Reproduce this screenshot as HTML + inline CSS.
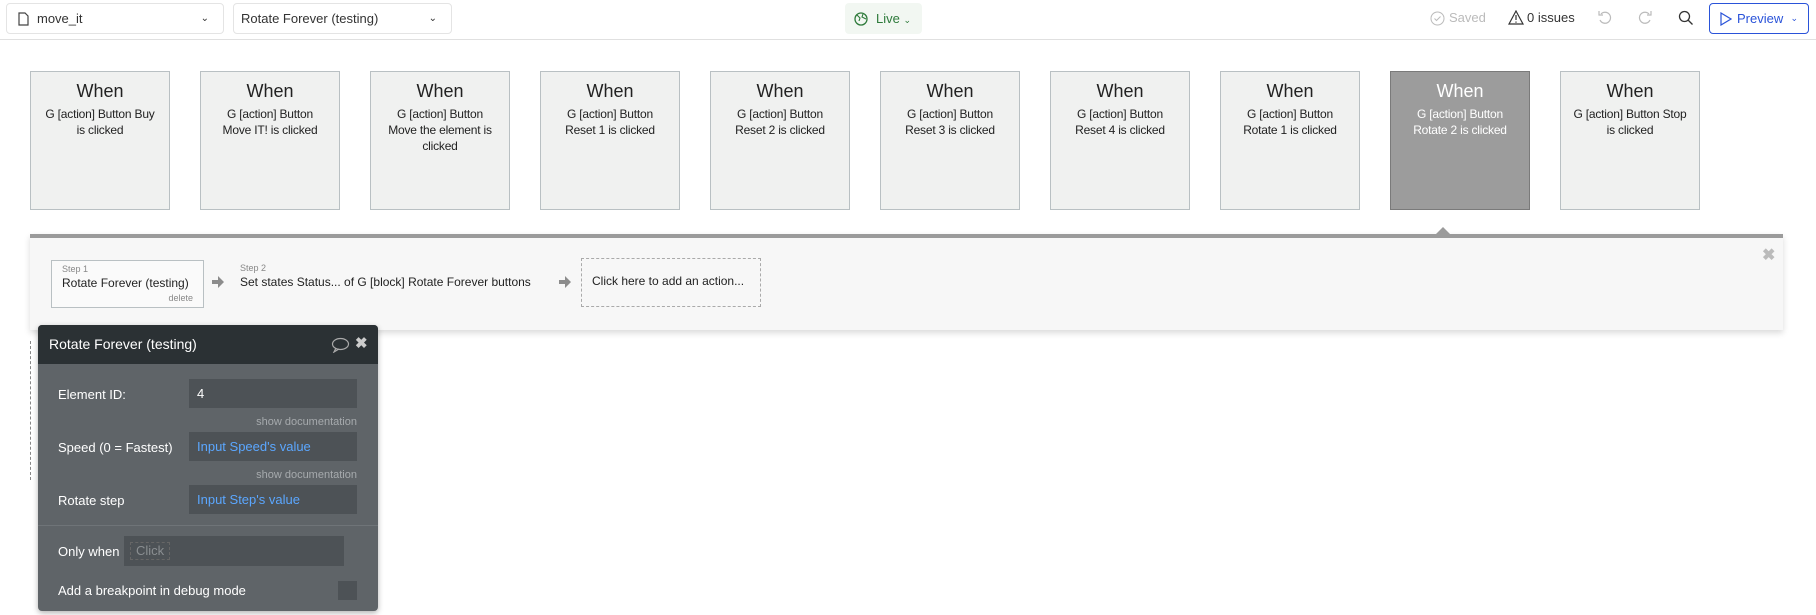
<!DOCTYPE html>
<html><head><meta charset="utf-8"><style>
*{box-sizing:border-box;margin:0;padding:0}
body{width:1816px;height:615px;overflow:hidden;background:#fff;font-family:"Liberation Sans",sans-serif;color:#222;position:relative}
.abs{position:absolute}
.dd{position:absolute;top:3px;height:31px;border:1px solid #e4e4e4;border-radius:4px;font-size:13px;line-height:29px;color:#333}
.card{position:absolute;top:71px;width:140px;height:139px;background:#f0f1f0;border:1px solid #b9c0c3;text-align:center;color:#222;white-space:nowrap}
.card .w{font-size:18px;margin-top:9px;line-height:20px}
.card .d{font-size:12px;line-height:16px;margin-top:5px;letter-spacing:-0.2px}
.card.sel{background:#9c9c9c;border-color:#7a7a7a;color:#fff}
.lbl{position:absolute;left:58px;font-size:13px;color:#fff}
.inp{position:absolute;left:189px;width:168px;height:29px;background:#4d5256;font-size:13px;line-height:29px;padding-left:8px}
.doc{position:absolute;right:21px;font-size:11px;color:#a6aaad}
</style></head><body>
<div class="dd" style="left:6px;width:218px;padding-left:30px">move_it<span class="abs" style="right:14px;top:0;font-size:10px">&#8964;</span>
<svg class="abs" style="left:11px;top:8px" width="11" height="14" viewBox="0 0 11 14"><path d="M1 1h6l3 3v9H1z" fill="none" stroke="#444" stroke-width="1.2"/></svg></div>
<div class="dd" style="left:233px;width:219px;padding-left:7px">Rotate Forever (testing)<span class="abs" style="right:14px;top:0;font-size:10px">&#8964;</span></div>
<div class="abs" style="left:845px;top:3px;width:77px;height:31px;background:#f2f7f2;border-radius:4px;font-size:13px;line-height:31px;color:#2d7a3a;padding-left:31px">Live <span style="font-size:9px">&#8964;</span>
<svg class="abs" style="left:9px;top:9px" width="14" height="14" viewBox="0 0 14 14"><circle cx="7" cy="7" r="6" fill="none" stroke="#2d7a3a" stroke-width="1.3"/><path d="M3 3l3 3-1 3M9 2l-1 3 4 2" fill="none" stroke="#2d7a3a" stroke-width="1.1"/></svg></div>
<div class="abs" style="left:0;top:39px;width:1816px;height:1px;background:#e0e0e0"></div>
<svg class="abs" style="left:1430px;top:11px" width="15" height="15"><circle cx="7.5" cy="7.5" r="6.5" fill="none" stroke="#bbb"/><path d="M4.5 7.5l2 2 4-4" fill="none" stroke="#bbb"/></svg>
<div class="abs" style="left:1449px;top:10px;font-size:13px;color:#bbb">Saved</div>
<svg class="abs" style="left:1508px;top:10px" width="16" height="15"><path d="M8 1L15 14H1z" fill="none" stroke="#333" stroke-width="1.2"/><path d="M8 5v5M8 11.5v1.3" stroke="#333" stroke-width="1.2"/></svg>
<div class="abs" style="left:1527px;top:10px;font-size:13px;color:#333">0 issues</div>
<svg class="abs" style="left:1597px;top:10px" width="15" height="15"><path d="M4 4a5.5 5.5 0 1 1-1 6" fill="none" stroke="#bbb" stroke-width="1.2"/><path d="M2 1v4h4" fill="none" stroke="#bbb" stroke-width="1.2"/></svg>
<svg class="abs" style="left:1638px;top:10px" width="15" height="15"><path d="M11 4a5.5 5.5 0 1 0 1 6" fill="none" stroke="#bbb" stroke-width="1.2"/><path d="M13 1v4H9" fill="none" stroke="#bbb" stroke-width="1.2"/></svg>
<svg class="abs" style="left:1678px;top:10px" width="16" height="16"><circle cx="6.5" cy="6.5" r="5" fill="none" stroke="#333" stroke-width="1.3"/><path d="M10 10l4.5 4.5" stroke="#333" stroke-width="1.3"/></svg>
<div class="abs" style="left:1709px;top:3px;width:100px;height:31px;border:1px solid #2a53d9;border-radius:4px;font-size:13px;line-height:29px;color:#2a53d9;padding-left:27px;white-space:nowrap">Preview<span class="abs" style="right:10px;top:0;font-size:9px">&#8964;</span>
<svg class="abs" style="left:10px;top:8px" width="12" height="14"><path d="M1 1l10 6-10 6z" fill="none" stroke="#2a53d9" stroke-width="1.2"/></svg></div>

<div class="card" style="left:30px"><div class="w">When</div><div class="d">G [action] Button Buy<br>is clicked</div></div>
<div class="card" style="left:200px"><div class="w">When</div><div class="d">G [action] Button<br>Move IT! is clicked</div></div>
<div class="card" style="left:370px"><div class="w">When</div><div class="d">G [action] Button<br>Move the element is<br>clicked</div></div>
<div class="card" style="left:540px"><div class="w">When</div><div class="d">G [action] Button<br>Reset 1 is clicked</div></div>
<div class="card" style="left:710px"><div class="w">When</div><div class="d">G [action] Button<br>Reset 2 is clicked</div></div>
<div class="card" style="left:880px"><div class="w">When</div><div class="d">G [action] Button<br>Reset 3 is clicked</div></div>
<div class="card" style="left:1050px"><div class="w">When</div><div class="d">G [action] Button<br>Reset 4 is clicked</div></div>
<div class="card" style="left:1220px"><div class="w">When</div><div class="d">G [action] Button<br>Rotate 1 is clicked</div></div>
<div class="card sel" style="left:1390px"><div class="w">When</div><div class="d">G [action] Button<br>Rotate 2 is clicked</div></div>
<div class="card" style="left:1560px"><div class="w">When</div><div class="d">G [action] Button Stop<br>is clicked</div></div>

<div class="abs" style="left:30px;top:234px;width:1753px;height:96px;background:#f7f7f7;border-top:4px solid #9b9b9b;box-shadow:0 3px 6px rgba(0,0,0,.15)"></div>
<div class="abs" style="left:1436px;top:227px;width:0;height:0;border-left:7px solid transparent;border-right:7px solid transparent;border-bottom:7px solid #9b9b9b"></div>
<div class="abs" style="left:1762px;top:245px;font-size:16px;color:#bbb;font-weight:bold">&#10006;</div>
<div class="abs" style="left:51px;top:260px;width:153px;height:48px;border:1px solid #b9c0c3;background:#fafafa">
<div class="abs" style="left:10px;top:3px;font-size:9px;color:#888">Step 1</div>
<div class="abs" style="left:10px;top:15px;font-size:12px;color:#222">Rotate Forever (testing)</div>
<div class="abs" style="right:10px;top:32px;font-size:9px;color:#888">delete</div></div>
<svg class="abs" style="left:211px;top:275px" width="14" height="14"><path d="M1 5h6V1l6 6-6 6V9H1z" fill="#8c8c8c"/></svg>
<div class="abs" style="left:240px;top:263px;font-size:9px;color:#888">Step 2</div>
<div class="abs" style="left:240px;top:275px;font-size:12px;color:#222">Set states Status... of G [block] Rotate Forever buttons</div>
<svg class="abs" style="left:558px;top:275px" width="14" height="14"><path d="M1 5h6V1l6 6-6 6V9H1z" fill="#8c8c8c"/></svg>
<div class="abs" style="left:581px;top:258px;width:180px;height:49px;border:1px dashed #aaa;font-size:12px;line-height:45px;padding-left:10px;color:#222">Click here to add an action...</div>

<div class="abs" style="left:30px;top:341px;width:1px;height:139px;border-left:1px dashed #888"></div>
<div class="abs" style="left:38px;top:325px;width:340px;height:286px;background:#5f6468;border-radius:4px;box-shadow:0 2px 6px rgba(0,0,0,.3);overflow:hidden">
<div class="abs" style="left:0;top:0;width:340px;height:39px;background:#2b3134;color:#fff;font-size:14px;line-height:38px;padding-left:11px">Rotate Forever (testing)
<svg class="abs" style="left:293px;top:12px" width="19" height="16"><ellipse cx="9.5" cy="7" rx="8" ry="5.5" fill="none" stroke="#aaa" stroke-width="1.2"/><path d="M5 11l-2 4 5-3" fill="none" stroke="#aaa" stroke-width="1.2"/></svg>
<span class="abs" style="left:317px;top:0;font-size:15px;color:#ccc;font-weight:bold">&#10006;</span></div>
<div class="lbl" style="left:20px;top:62px">Element ID:</div>
<div class="inp" style="left:151px;top:54px;color:#fff">4</div>
<div class="doc" style="top:91px">show documentation</div>
<div class="lbl" style="left:20px;top:115px">Speed (0 = Fastest)</div>
<div class="inp" style="left:151px;top:107px;color:#5ba7ff">Input Speed's value</div>
<div class="doc" style="top:144px">show documentation</div>
<div class="lbl" style="left:20px;top:168px">Rotate step</div>
<div class="inp" style="left:151px;top:160px;color:#5ba7ff">Input Step's value</div>
<div class="abs" style="left:0;top:200px;width:340px;height:1px;background:#6f7478"></div>
<div class="lbl" style="left:20px;top:219px">Only when</div>
<div class="inp" style="left:86px;top:211px;width:220px;height:30px;padding-left:0"><span style="margin-left:6px;border:1px dashed #666;color:#8a8e91;padding:0 5px;line-height:16px;display:inline-block">Click</span></div>
<div class="lbl" style="left:20px;top:258px">Add a breakpoint in debug mode</div>
<div class="abs" style="left:300px;top:256px;width:19px;height:19px;background:#4d5256"></div>
</div>
</body></html>
